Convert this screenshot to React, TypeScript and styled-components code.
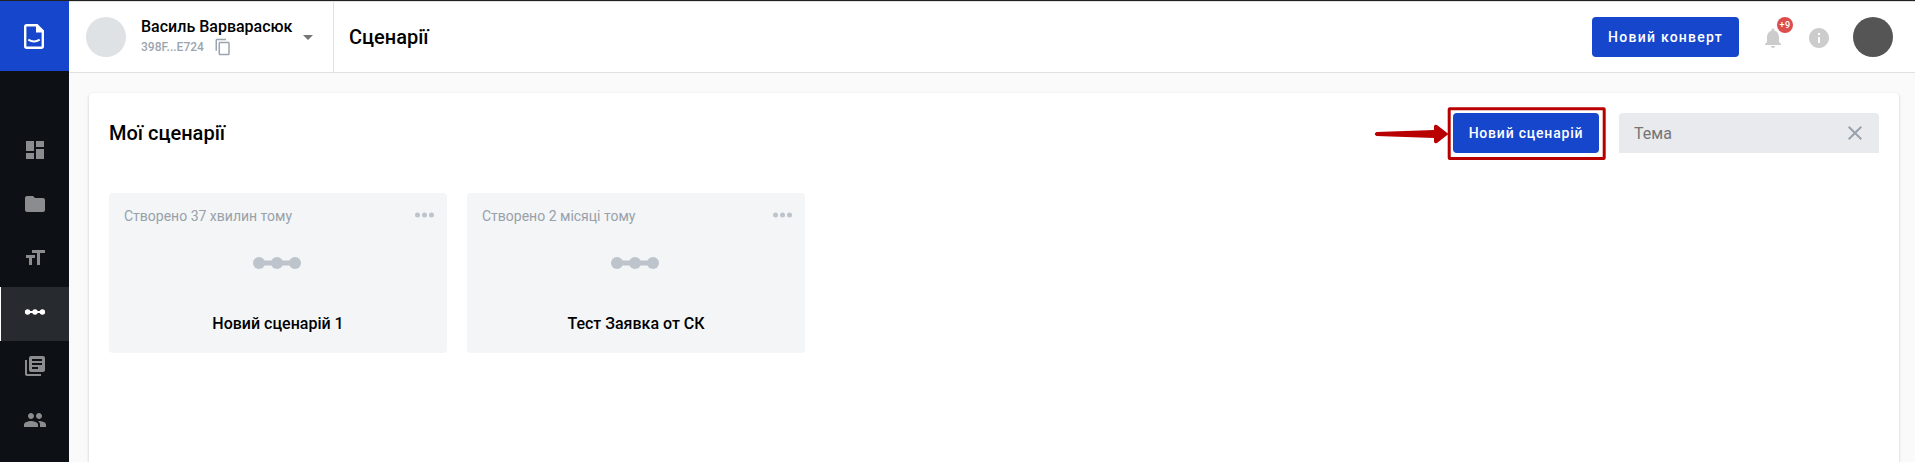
import React from "react";
import styled, { createGlobalStyle, css } from "styled-components";

const Global = createGlobalStyle`
  * { box-sizing: border-box; }
  body { margin: 0; background: #fafafa; font-family: Roboto, sans-serif; color: #000; }
  button, input { font-family: inherit; }
`;

const Page = styled.div`
  display: flex;
  height: 462px;
  overflow: hidden;
  border-top: 1px solid #212121;
`;

const Sidebar = styled.nav`
  flex: none;
  width: 69px;
  background: #0d1014;
`;

const Logo = styled.div`
  height: 70px;
  margin-bottom: 54px;
  padding: 23px 0 0 24px;
  background: #1546cc;
  svg { display: block; }
`;

const NavItem = styled.a<{ $active?: boolean }>`
  display: flex;
  align-items: center;
  justify-content: center;
  height: 54px;
  padding: 0 0 4px 1px;
  color: #8b8c8d;
  ${(p) => p.$active && css`
    padding-left: 0;
    color: #fff;
    background: #272a2e;
    border-left: 1px solid #fff;
  `}
`;

const Main = styled.div`
  flex: 1;
  min-width: 0;
  display: flex;
  flex-direction: column;
`;

const Header = styled.header`
  flex: none;
  display: flex;
  align-items: center;
  height: 72px;
  border-top: 1px solid #e0e0e0;
  border-bottom: 1px solid #dfe1e3;
  background: #fff;
`;

const Account = styled.div`
  display: flex;
  align-items: center;
  width: 265px;
  height: 100%;
  padding-left: 17px;
  border-right: 1px solid #dfe1e6;
`;

const Avatar = styled.div<{ $color: string }>`
  flex: none;
  width: 40px;
  height: 40px;
  border-radius: 50%;
  background: ${(p) => p.$color};
`;

const AccountText = styled.div`
  width: 152px;
  margin: 0 10px 0 15px;
  white-space: nowrap;
`;

const AccountName = styled.div`
  font-size: 16px;
  line-height: 20px;
  font-weight: 500;
`;

const AccountId = styled.div`
  display: flex;
  align-items: center;
  height: 20px;
  gap: 10px;
  font-size: 12px;
  font-weight: 500;
  color: #9ba5b1;
`;

const PageTitle = styled.h1`
  flex: 1;
  margin: 0 0 0 15px;
  font-size: 20px;
  line-height: 24px;
  font-weight: 500;
`;

const PrimaryButton = styled.button<{ $width: number; $spacing: number }>`
  width: ${(p) => p.$width}px;
  height: 40px;
  padding: 0;
  border: 0;
  border-radius: 4px;
  background: #1546cc;
  color: #fff;
  font-size: 14px;
  font-weight: 500;
  letter-spacing: ${(p) => p.$spacing}px;
  white-space: nowrap;
`;

const Bell = styled.div`
  position: relative;
  width: 24px;
  height: 24px;
  margin: 2px 22px 0 22px;
  color: #ccc;
  svg { display: block; }
`;

const Badge = styled.span`
  position: absolute;
  left: 16px;
  top: -9px;
  width: 16px;
  height: 16px;
  border-radius: 50%;
  background: #de4d4d;
  color: #fff;
  font-size: 9px;
  font-weight: 500;
  line-height: 16px;
  text-align: center;
  letter-spacing: 0.5px;
`;

const Info = styled.div`
  width: 24px;
  height: 24px;
  margin: 2px 22px 0 0;
  color: #ccc;
  svg { display: block; }
`;

const HeaderEnd = styled.div`
  display: flex;
  align-items: center;
  padding-right: 22px;
`;

const Panel = styled.section`
  flex: none;
  height: 400px;
  margin: 20px 16px 0 20px;
  padding: 20px 20px 0;
  border-radius: 4px 4px 0 0;
  background: #fff;
  box-shadow: 0 1px 3px rgba(0, 0, 0, 0.2);
`;

const Toolbar = styled.div`
  display: flex;
  align-items: center;
  height: 40px;
  margin-bottom: 40px;
`;

const PanelTitle = styled.h2`
  flex: 1;
  margin: 0;
  font-size: 20px;
  line-height: 24px;
  font-weight: 500;
`;

const Highlight = styled.div`
  position: relative;
  margin-right: 20px;
`;

const Callout = styled.svg`
  position: absolute;
  left: -80px;
  top: -8px;
  pointer-events: none;
`;

const Search = styled.label`
  display: flex;
  align-items: center;
  width: 260px;
  height: 40px;
  padding: 0 17px 0 15px;
  border-radius: 4px 4px 0 0;
  background: #e8eaed;
  color: #98a1ac;
`;

const SearchInput = styled.input`
  flex: 1;
  min-width: 0;
  padding: 0;
  border: 0;
  outline: 0;
  background: none;
  font-size: 16px;
  &::placeholder { color: #757575; }
`;

const Cards = styled.div`
  display: flex;
  gap: 20px;
`;

const Card = styled.article`
  display: flex;
  flex-direction: column;
  align-items: center;
  width: 338px;
  height: 160px;
  padding: 12px 13px 0 15px;
  border-radius: 4px;
  background: #f3f5f7;
  color: #bdc4cc;
`;

const CardTop = styled.div`
  display: flex;
  justify-content: space-between;
  width: 100%;
  height: 20px;
  svg { display: block; }
`;

const Created = styled.span`
  color: #98a1aa;
  font-size: 14px;
  line-height: 22px;
`;

const CardIcon = styled.svg`
  margin: 32px 4px 0 0;
`;

const CardTitle = styled.h3`
  margin: 45px 2px 0 0;
  color: #000;
  font-size: 16px;
  line-height: 20px;
  font-weight: 500;
`;

const NAV = [
  { d: "M3 13h8V3H3v10zm0 8h8v-6H3v6zm10 0h8V11h-8v10zm0-18v6h8V3h-8z" },
  { d: "M10 4H4c-1.100 0-2 .9-2 2v12c0 1.100.9 2 2 2h16c1.100 0 2-.9 2-2V8c0-1.100-.9-2-2-2h-8l-2-2z" },
  { d: "M9 4v3h5v12h3V7h5V4H9zm-6 8h3v7h3v-7h3V9H3v3z" },
  { active: true },
  { d: "M4 6H2v14c0 1.100.9 2 2 2h14v-2H4V6zm16-4H8c-1.100 0-2 .9-2 2v12c0 1.100.9 2 2 2h12c1.100 0 2-.9 2-2V4c0-1.100-.9-2-2-2zm-1 9H9V9h10v2zm-4 4H9v-2h6v2zm4-8H9V5h10v2z" },
  { d: "M16 11c1.660 0 2.990-1.340 2.990-3S17.660 5 16 5c-1.660 0-3 1.340-3 3s1.340 3 3 3zm-8 0c1.660 0 2.990-1.340 2.990-3S9.660 5 8 5C6.340 5 5 6.340 5 8s1.340 3 3 3zm0 2c-2.330 0-7 1.170-7 3.500V19h14v-2.500c0-2.330-4.670-3.500-7-3.500zm8 0c-.29 0-.62.020-.97.050 1.160.84 1.970 1.970 1.970 3.450V19h6v-2.500c0-2.330-4.670-3.500-7-3.500z" },
];

const Glyph = ({ d, size = 24 }: { d: string; size?: number }) => (
  <svg width={size} height={size} viewBox="0 0 24 24" fill="currentColor"><path d={d} /></svg>
);

const ChainDots = () => (
  <svg width="24" height="24" viewBox="0 0 24 24" fill="currentColor">
    <rect x="4" y="11" width="16" height="2" />
    <circle cx="4.600" cy="12" r="2.700" /><circle cx="12" cy="12" r="2.700" /><circle cx="19.400" cy="12" r="2.700" />
  </svg>
);

const CARDS = [
  { created: "Створено 37 хвилин тому", title: "Новий сценарій 1" },
  { created: "Створено 2 місяці тому", title: "Тест Заявка от СК" },
];

export default function App() {
  return (
    <>
      <Global />
      <Page>
        <Sidebar>
          <Logo>
            <svg width="20" height="25" viewBox="0 0 20 25" fill="none" stroke="#fff" strokeWidth="2.400">
              <path d="M2.500 1.200H13L18.800 7V22.500a1.300 1.300 0 0 1-1.300 1.300H2.500a1.300 1.300 0 0 1-1.300-1.300V2.500a1.300 1.300 0 0 1 1.300-1.300z" />
              <path d="M12 1v7.500h7V6.500L13.500 1z" fill="#fff" stroke="none" />
              <path d="M4.300 15.700q5.700 3.600 11.400 0" strokeWidth="2" />
            </svg>
          </Logo>
          {NAV.map((n, i) => (
            <NavItem key={i} $active={n.active}>{n.d ? <Glyph d={n.d} /> : <ChainDots />}</NavItem>
          ))}
        </Sidebar>
        <Main>
          <Header>
            <Account>
              <Avatar $color="#dee2e5" />
              <AccountText>
                <AccountName>Василь Варварасюк</AccountName>
                <AccountId>
                  398F...E724
                  <Glyph size={18} d="M16 1H4c-1.100 0-2 .9-2 2v14h2V3h12V1zm3 4H8c-1.100 0-2 .9-2 2v14c0 1.100.9 2 2 2h11c1.100 0 2-.9 2-2V7c0-1.100-.9-2-2-2zm0 16H8V7h11v14z" />
                </AccountId>
              </AccountText>
              <svg width="10" height="5" viewBox="0 0 10 5"><path d="M0 0h10L5 5z" fill="#757575" /></svg>
            </Account>
            <PageTitle>Сценарії</PageTitle>
            <HeaderEnd>
              <PrimaryButton $width={147} $spacing={1.25}>Новий конверт</PrimaryButton>
              <Bell>
                <Glyph d="M12 22c1.100 0 2-.9 2-2h-4c0 1.100.89 2 2 2zm6-6v-5c0-3.070-1.640-5.640-4.500-6.320V4c0-.83-.67-1.500-1.500-1.500s-1.500.67-1.500 1.500v.68C7.630 5.360 6 7.920 6 11v5l-2 2v1h16v-1l-2-2z" />
                <Badge>+9</Badge>
              </Bell>
              <Info><Glyph d="M12 2C6.480 2 2 6.480 2 12s4.480 10 10 10 10-4.480 10-10S17.520 2 12 2zm1 15h-2v-6h2v6zm0-8h-2V7h2v2z" /></Info>
              <Avatar $color="#555" />
            </HeaderEnd>
          </Header>
          <Panel>
            <Toolbar>
              <PanelTitle>Мої сценарії</PanelTitle>
              <Highlight>
                <PrimaryButton $width={146} $spacing={0.8}>Новий сценарій</PrimaryButton>
                <Callout width="236" height="56" viewBox="0 0 236 56" fill="none">
                  <rect x="76.200" y="3.800" width="155" height="49.700" rx="0.500" stroke="#b80000" strokeWidth="3" />
                  <path d="M3.500 27L61 25V21.500Q61 19 64 20L75.500 29 64 38Q61 39 61 36.500V33L3.500 31Q0 29 3.500 27z" fill="#b80000" />
                </Callout>
              </Highlight>
              <Search>
                <SearchInput placeholder="Тема" />
                <svg width="14" height="14" viewBox="0 0 14 14" stroke="currentColor" strokeWidth="2"><path d="M.7.7l12.600 12.600M13.300.7L.7 13.300" /></svg>
              </Search>
            </Toolbar>
            <Cards>
              {CARDS.map((c) => (
                <Card key={c.title}>
                  <CardTop>
                    <Created>{c.created}</Created>
                    <svg width="19" height="20" viewBox="0 0 19 20" fill="currentColor">
                      <circle cx="2.500" cy="10" r="2.500" /><circle cx="9.500" cy="10" r="2.500" /><circle cx="16.500" cy="10" r="2.500" />
                    </svg>
                  </CardTop>
                  <CardIcon width="48" height="12" viewBox="0 0 48 12" fill="currentColor">
                    <rect x="6" y="3.500" width="36" height="5" />
                    <circle cx="6" cy="6" r="6" /><circle cx="24" cy="6" r="6" /><circle cx="42" cy="6" r="6" />
                  </CardIcon>
                  <CardTitle>{c.title}</CardTitle>
                </Card>
              ))}
            </Cards>
          </Panel>
        </Main>
      </Page>
    </>
  );
}
